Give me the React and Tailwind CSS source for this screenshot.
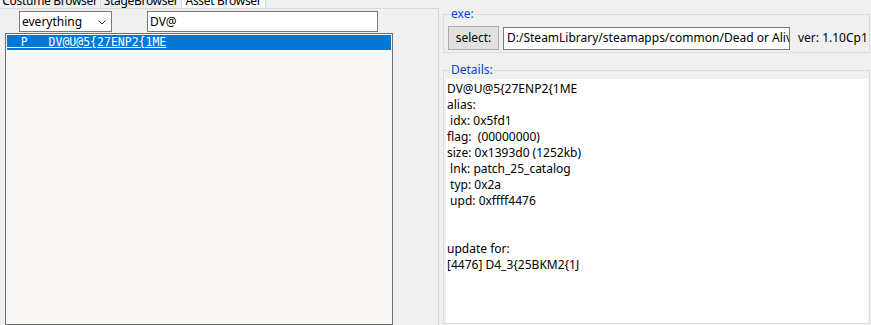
import React from 'react'

const details = [
    "DV@U@5{27ENP2{1ME",
    "alias:",
    " idx: 0x5fd1",
    "flag:  (00000000)",
    "size: 0x1393d0 (1252kb)",
    " lnk: patch_25_catalog",
    " typ: 0x2a",
    " upd: 0xffff4476",
    "",
    "",
    "update for:",
    "[4476] D4_3{25BKM2{1J",
];

function Tab({ label, width, active }) {
    return (
        <div className={`h-[20px] pt-[5px] leading-[16px] whitespace-nowrap overflow-hidden border-r border-[#d9d9d9] text-center ${width} ${active ? 'bg-white' : 'bg-[#f0f0f0]'}`}>
            {label}
        </div>
    );
}

export default function App() {
    return (
        <div className="w-[871px] h-[325px] overflow-hidden flex bg-[#f0f0f0] text-[12px] text-black font-['Noto_Sans',sans-serif]">
            <div className="w-[439px] flex flex-col">
                <div className="h-[8px] overflow-hidden flex items-end">
                    <Tab label="Costume Browser" width="w-[101px] tracking-[-0.3px]" />
                    <Tab label="StageBrowser" width="w-[81px] tracking-[-0.3px]" />
                    <Tab label="Asset Browser" width="w-[84px] tracking-[-0.3px]" active />
                </div>
                <div className="flex-1 flex flex-col border-t border-r border-[#d9d9d9]">
                    <div className="flex mt-[2px] ml-[19px]">
                        <div className="w-[93px] h-[21px] flex items-center justify-between pl-[2px] pr-[5px] bg-white border border-[#7a7a7a] leading-[16px]">
                            <span>everything</span>
                            <svg width="8" height="5" viewBox="0 0 8 5" className="mt-[1px]">
                                <path d="M0.5 0.5 L4 4 L7.5 0.5" fill="none" stroke="#333" strokeWidth="1" />
                            </svg>
                        </div>
                        <div className="ml-[35px] w-[231px] h-[21px] flex items-center pl-[2px] bg-white border border-[#7a7a7a] leading-[16px]">
                            DV@
                        </div>
                    </div>
                    <div className="mt-[1px] ml-[5px] w-[388px] flex-1 border border-[#6e6e6e] bg-[#f9f8f5] p-[1px]">
                        <div className="h-[15px] bg-[#0078d7] text-white font-['DejaVu_Sans_Mono',monospace] text-[11.5px] leading-[15px] whitespace-pre">
                            <span className="underline">  P   DV@U@5{'{'}27ENP2{'{'}1ME</span>
                        </div>
                    </div>
                </div>
            </div>
            <div className="flex-1 flex flex-col pl-[4px]">
                <fieldset className="mt-[6px] w-[427px] border border-[#dcdcdc] pl-[4px] pb-[2px]">
                    <legend className="ml-[2px] px-[1px] leading-[16px] text-[#0046d5]">exe:</legend>
                    <div className="mt-[4px] h-[24px] flex items-center">
                        <div className="w-[51px] h-[24px] flex items-center justify-center bg-[#e1e1e1] border border-[#adadad] leading-[16px]">select:</div>
                        <div className="ml-[4px] w-[287px] h-[23px] flex items-center pl-[3px] bg-white border border-[#7a7a7a] overflow-hidden whitespace-nowrap leading-[16px]">
                            D:/SteamLibrary/steamapps/common/Dead or Alive
                        </div>
                        <span className="ml-[8px] leading-[16px]">ver: 1.10Cp1</span>
                    </div>
                </fieldset>
                <fieldset className="mt-[9px] w-[427px] border border-[#dcdcdc] pl-[2px] pr-[1px]">
                    <legend className="ml-[4px] px-[1px] leading-[16px] text-[#0046d5]">Details:</legend>
                    <div className="mt-[1px] h-[244px] bg-white pl-[1px] pt-[2px] leading-[16px] whitespace-pre">
                        {details.map((line, i) => (
                            <div key={i} className="h-[16px]">{line}</div>
                        ))}
                    </div>
                </fieldset>
            </div>
        </div>
    );
}
